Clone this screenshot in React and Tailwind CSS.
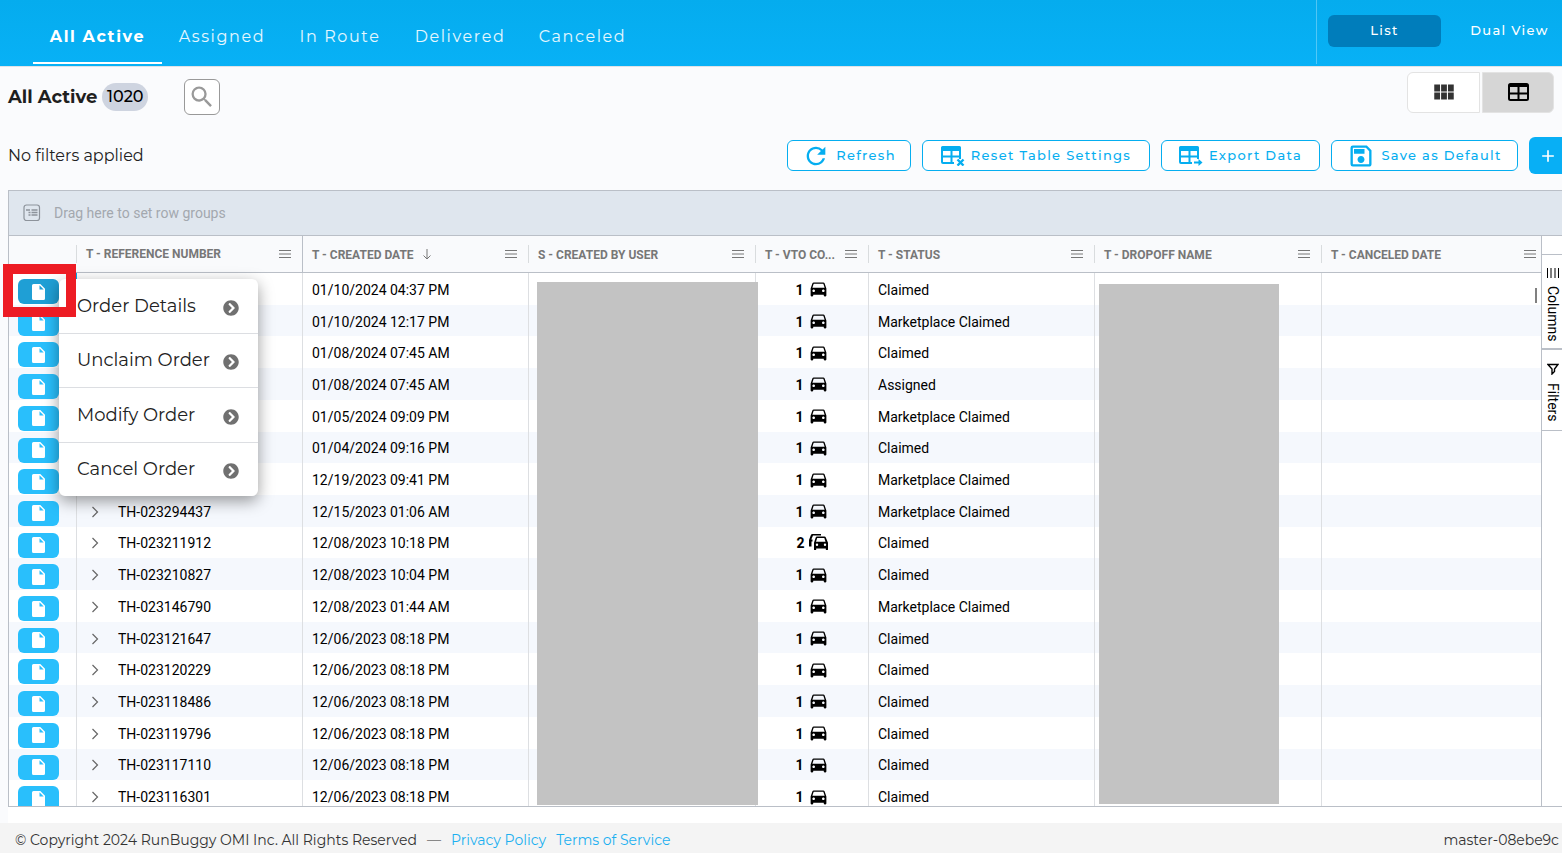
import { MdAdd, MdDirectionsCar, MdOutlineSave, MdRefresh, MdSearch, MdViewModule } from "react-icons/md";
import { FaChevronCircleRight } from "react-icons/fa";

const TABS = [
  { label: "All Active", active: true, width: "w-[129px]" },
  { label: "Assigned", width: "w-[120px]" },
  { label: "In Route", width: "w-[116px]" },
  { label: "Delivered", width: "w-[124px]" },
  { label: "Canceled", width: "w-[121px]" },
];

const COLUMNS = [
  { label: "T - REFERENCE NUMBER", width: "w-[226px]", pinned: true },
  { label: "T - CREATED DATE", width: "w-[226px]", sorted: true },
  { label: "S - CREATED BY USER", width: "w-[227px]" },
  { label: "T - VTO CO...", width: "w-[113px]" },
  { label: "T - STATUS", width: "w-[226px]" },
  { label: "T - DROPOFF NAME", width: "w-[227px]" },
  { label: "T - CANCELED DATE", last: true },
];

const ROWS = [
  { ref: "", created: "01/10/2024 04:37 PM", cars: 1, status: "Claimed" },
  { ref: "", created: "01/10/2024 12:17 PM", cars: 1, status: "Marketplace Claimed" },
  { ref: "", created: "01/08/2024 07:45 AM", cars: 1, status: "Claimed" },
  { ref: "", created: "01/08/2024 07:45 AM", cars: 1, status: "Assigned" },
  { ref: "", created: "01/05/2024 09:09 PM", cars: 1, status: "Marketplace Claimed" },
  { ref: "", created: "01/04/2024 09:16 PM", cars: 1, status: "Claimed" },
  { ref: "", created: "12/19/2023 09:41 PM", cars: 1, status: "Marketplace Claimed" },
  { ref: "TH-023294437", created: "12/15/2023 01:06 AM", cars: 1, status: "Marketplace Claimed" },
  { ref: "TH-023211912", created: "12/08/2023 10:18 PM", cars: 2, status: "Claimed" },
  { ref: "TH-023210827", created: "12/08/2023 10:04 PM", cars: 1, status: "Claimed" },
  { ref: "TH-023146790", created: "12/08/2023 01:44 AM", cars: 1, status: "Marketplace Claimed" },
  { ref: "TH-023121647", created: "12/06/2023 08:18 PM", cars: 1, status: "Claimed" },
  { ref: "TH-023120229", created: "12/06/2023 08:18 PM", cars: 1, status: "Claimed" },
  { ref: "TH-023118486", created: "12/06/2023 08:18 PM", cars: 1, status: "Claimed" },
  { ref: "TH-023119796", created: "12/06/2023 08:18 PM", cars: 1, status: "Claimed" },
  { ref: "TH-023117110", created: "12/06/2023 08:18 PM", cars: 1, status: "Claimed" },
  { ref: "TH-023116301", created: "12/06/2023 08:18 PM", cars: 1, status: "Claimed" },
];

const MENU_ITEMS = ["Order Details", "Unclaim Order", "Modify Order", "Cancel Order"];

// table glyph with a small badge in the lower right corner
function TableBadgeIcon({ badge }) {
  return (
    <svg viewBox="0 0 24 20" className="h-5 w-6 shrink-0" fill="none" stroke="currentColor" strokeWidth="2">
      <path d="M0 5V1.500A1.500 1.500 0 0 1 1.500 0h17A1.500 1.500 0 0 1 20 1.500V5z" fill="currentColor" stroke="none" />
      <path d="M19 4v9M13 17H2a1 1 0 0 1-1-1V4" />
      <path d="M1 10.500h18M10.500 4v13" />
      {badge === "x" && <path d="M16.500 13.500l6 6M22.500 13.500l-6 6" strokeWidth="2.400" />}
      {badge === "arrow" && (
        <>
          <path d="M15 16.500h5" />
          <path d="M19.500 13l4 3.500-4 3.500z" fill="currentColor" stroke="none" />
        </>
      )}
    </svg>
  );
}

function TableIcon() {
  return (
    <svg viewBox="0 0 21 18" className="h-[18px] w-[21px]" fill="none" stroke="currentColor" strokeWidth="2">
      <rect x="1" y="1" width="19" height="16" rx="1.500" />
      <path d="M1 2.500h19" strokeWidth="3" />
      <path d="M1 10.500h19M10.500 3v14" />
    </svg>
  );
}

function FileIcon() {
  return (
    <svg viewBox="0 0 13 16" className="h-4 w-[13px]" fill="currentColor">
      <path
        fillRule="evenodd"
        d="M1.500 0h6.800L13 4.800v9.700a1.500 1.500 0 0 1-1.500 1.500h-10A1.500 1.500 0 0 1 0 14.500v-13A1.500 1.500 0 0 1 1.500 0zM7.500 1.300V5.500h4.200z"
      />
    </svg>
  );
}

function CarsIcon() {
  return (
    <svg viewBox="0 0 19 18" className="h-[18px] w-[19px]" fill="currentColor">
      <path d="M0 13.500V7l1.900-5C2.200 1.300 2.700 1 3.400 1H12v1.500H4L2.300 6.500H3.500v2H2.500v5z" />
      <path
        fillRule="evenodd"
        d="M16.800 4.500c-.2-.6-.7-1-1.300-1H8c-.6 0-1.100.4-1.300 1L5 9.700V16.400c0 .3.300.6.600.6h1c.3 0 .6-.3.600-.6v-1h9.600v1c0 .3.300.6.600.6h1c.3 0 .6-.3.600-.6V9.700zM8.200 5h7.100l1.200 3.700H7zM8 13a1.200 1.200 0 1 1 0-2.400 1.200 1.200 0 0 1 0 2.400zm8 0a1.200 1.200 0 1 1 0-2.400 1.200 1.200 0 0 1 0 2.400z"
      />
    </svg>
  );
}

function MenuLines() {
  return (
    <button type="button" aria-label="Column menu" className="ml-auto shrink-0 text-[#777]">
      <svg viewBox="0 0 12 10" className="h-[10px] w-3" stroke="currentColor">
        <path d="M0 1.500h12M0 5h12M0 8.500h12" />
      </svg>
    </button>
  );
}

function ToolbarButton({ icon, children, className }) {
  return (
    <button
      type="button"
      className={`flex h-[31px] items-center justify-center gap-1.5 rounded-md border border-[#05aef0] bg-white text-[13px] font-medium tracking-widest whitespace-nowrap text-[#05aef0] ${className}`}
    >
      {icon}
      {children}
    </button>
  );
}

function TopBar() {
  return (
    <header className="flex h-[66px] shrink-0 bg-gradient-to-b from-[#05acee] to-[#08b1f6] pb-0.5 text-white">
      <nav className="flex pl-[33px]">
        {TABS.map((tab) => (
          <a
            key={tab.label}
            href="#"
            className={`flex items-center justify-center border-b-2 pt-3 text-base tracking-widest whitespace-nowrap ${tab.width} ${
              tab.active ? "border-white font-bold" : "border-transparent text-white/90"
            }`}
          >
            {tab.label}
          </a>
        ))}
      </nav>
      <div className="ml-auto flex items-start gap-4 border-l border-white/30 pt-[15px] pl-[11px]">
        <button type="button" className="h-8 w-[113px] rounded-md bg-[#007dbb] text-[13px] font-medium tracking-widest">
          List
        </button>
        <button type="button" className="h-8 w-[105px] text-[13px] font-medium tracking-widest whitespace-nowrap">
          Dual View
        </button>
      </div>
    </header>
  );
}

function TitleRow() {
  return (
    <div className="flex items-start border-t border-[#dfe3e8] px-2 pt-[5px]">
      <div className="flex h-[50px] items-center">
        <h1 className="text-lg font-bold text-[#1f1f1f]">All Active</h1>
        <span className="ml-[5px] flex h-7 w-[46px] items-center justify-center rounded-full bg-[#ced4e0] text-base font-medium text-black">
          1020
        </span>
        <button
          type="button"
          aria-label="Search"
          className="ml-9 flex h-9 w-9 items-center justify-center rounded-md border border-[#999] bg-white text-[#999]"
        >
          <MdSearch className="h-7 w-7" />
        </button>
      </div>
      <div className="ml-auto flex gap-0.5">
        <button
          type="button"
          aria-label="Card view"
          className="flex h-[41px] w-[73px] items-center justify-center rounded-l-md border border-[#e3e3e3] bg-white pb-0.5 text-[#333]"
        >
          <MdViewModule className="h-[26px] w-[26px]" />
        </button>
        <button
          type="button"
          aria-label="Table view"
          className="flex h-[41px] w-[72px] items-center justify-center rounded-r-md border border-[#e3e3e3] bg-[#d6d6d6] pb-0.5 text-black"
        >
          <TableIcon />
        </button>
      </div>
    </div>
  );
}

function Toolbar() {
  return (
    <div className="flex items-center pt-[15px] pl-2">
      <p className="text-base text-[#222]">No filters applied</p>
      <div className="ml-auto flex items-center gap-[11px]">
        <ToolbarButton className="w-[124px]" icon={<MdRefresh className="h-7 w-7" />}>
          Refresh
        </ToolbarButton>
        <ToolbarButton className="w-[228px]" icon={<TableBadgeIcon badge="x" />}>
          Reset Table Settings
        </ToolbarButton>
        <ToolbarButton className="w-[159px]" icon={<TableBadgeIcon badge="arrow" />}>
          Export Data
        </ToolbarButton>
        <ToolbarButton className="w-[187px]" icon={<MdOutlineSave className="h-7 w-7" />}>
          Save as Default
        </ToolbarButton>
        <button
          type="button"
          aria-label="Add"
          className="flex h-[37px] w-[33px] items-center justify-center rounded-l-md bg-[#08aff5] pl-1 text-white"
        >
          <MdAdd className="h-5 w-5" />
        </button>
      </div>
    </div>
  );
}

function OrdersTable() {
  return (
    <table className="h-[576px] w-full table-fixed border-separate border-spacing-0 text-sm text-black">
      <thead>
        <tr className="h-[37px] bg-[#f9fafc] text-xs text-[#777]">
          <th className="w-[68px] border-b border-[#babfc7] p-0">
            <div className="h-[18px] border-r border-[#d9dcde]" />
          </th>
          {COLUMNS.map((col) => (
            <th
              key={col.label}
              className={`border-b border-[#babfc7] p-0 ${col.width || ""} ${col.pinned ? "border-r" : ""}`}
            >
              <div
                className={`flex h-[18px] items-center gap-2 pl-[9px] ${
                  col.last ? "pr-[5px]" : "pr-[11px]"
                } ${col.pinned || col.last ? "" : "border-r border-[#d9dcde]"}`}
              >
                <span className={`font-bold whitespace-nowrap ${col.pinned ? "" : "pt-0.5"}`}>{col.label}</span>
                {col.sorted && (
                  <svg viewBox="0 0 10 12" className="h-3 w-[10px] shrink-0" fill="none" stroke="currentColor">
                    <path d="M5 1v10M1.500 7.500L5 11l3.500-3.500" />
                  </svg>
                )}
                <MenuLines />
              </div>
            </th>
          ))}
        </tr>
      </thead>
      <tbody>
        {ROWS.map((row, i) => (
          <tr key={i} className="odd:bg-white even:bg-[#f5f8fd]">
            <td className={`border-r p-0 pt-[6px] pl-[9px] align-top ${i === 0 ? "border-[#05aef0]" : "border-[#dddfe2]"}`}>
              <button
                type="button"
                aria-label="Order actions"
                className={`flex h-[25px] w-[41px] items-center justify-center rounded-md text-white ${
                  i === 0 ? "bg-[#1f9fd5]" : "bg-[#29bffc]"
                }`}
              >
                <FileIcon />
              </button>
            </td>
            <td className="border-r border-[#dddfe2] p-0 pt-0.5">
              {row.ref && (
                <div className="flex items-center pl-[14px]">
                  <svg viewBox="0 0 8 12" className="h-3 w-2" fill="none" stroke="#666" strokeWidth="1.200">
                    <path d="M1.500 1l5 5-5 5" />
                  </svg>
                  <span className="pl-[19px]">{row.ref}</span>
                </div>
              )}
            </td>
            <td className="border-r border-[#dddfe2] p-0 pt-0.5 pl-[9px]">{row.created}</td>
            <td className="border-r border-[#dddfe2] p-0" />
            <td className="border-r border-[#dddfe2] p-0">
              <div className="flex items-center justify-center gap-1 font-bold">
                <span className="pt-0.5">{row.cars}</span>
                {row.cars === 1 ? <MdDirectionsCar className="h-[21px] w-[21px]" /> : <CarsIcon />}
              </div>
            </td>
            <td className="border-r border-[#dddfe2] p-0 pt-0.5 pl-[9px]">{row.status}</td>
            <td className="border-r border-[#dddfe2] p-0" />
            <td className="p-0" />
          </tr>
        ))}
      </tbody>
    </table>
  );
}

function SideBar() {
  return (
    <aside className="flex w-[21px] shrink-0 flex-col border-l border-[#babfc7] bg-white pt-[18px] text-sm text-black">
      <button
        type="button"
        className="flex h-[95px] items-center gap-2 border-t border-b border-[#babfc7] pt-[13px] pl-0.5 [writing-mode:vertical-rl]"
      >
        <svg viewBox="0 0 12 10" className="h-[10px] w-3" stroke="currentColor">
          <path d="M.5 0v10M4 0v10M8 0v10M11.500 0v10" />
        </svg>
        Columns
      </button>
      <button
        type="button"
        className="flex h-[82px] items-center gap-2 border-t border-b border-[#babfc7] pt-[13px] pl-0.5 [writing-mode:vertical-rl]"
      >
        <svg viewBox="0 0 12 12" className="h-3 w-3" fill="none" stroke="currentColor" strokeWidth="1.400">
          <path d="M1 1.500h10L7.500 6v2.500L5 11V6z" />
        </svg>
        Filters
      </button>
    </aside>
  );
}

function OrderMenu() {
  return (
    <ul className="absolute top-[89px] left-[51px] flex h-[217px] w-[199px] flex-col rounded-md bg-white shadow-[0_5px_16px_rgba(0,0,0,0.4)]">
      {MENU_ITEMS.map((item) => (
        <li key={item} className="flex flex-1 border-b border-[#dcdee2] last:border-b-0">
          <button type="button" className="flex w-full items-center justify-between pr-[19px] pl-[18px] text-lg text-[#222]">
            <span className="whitespace-nowrap">{item}</span>
            <FaChevronCircleRight className="mt-1 h-4 w-4 text-[#707070]" />
          </button>
        </li>
      ))}
    </ul>
  );
}

export default function App() {
  return (
    <div className="flex h-screen flex-col overflow-hidden bg-[#fafbfd] font-['Montserrat','Inter',sans-serif]">
      <TopBar />
      <TitleRow />
      <Toolbar />

      <main className="relative mt-4 ml-2 flex min-h-0 flex-1 flex-col bg-white pb-4 font-['Roboto',sans-serif]">
        <div className="flex min-h-0 flex-1 flex-col border-y border-l border-[#babfc7]">
          <div className="flex h-[45px] shrink-0 items-center border-b border-[#babfc7] bg-[#dfe6ee] pl-[14px] text-sm text-[#a3a8ae]">
            <svg viewBox="0 0 18 18" className="h-[18px] w-[18px]" fill="none" stroke="#8d939b">
              <rect x="1" y="1" width="15.500" height="15.500" rx="2.500" strokeWidth="1.200" />
              <path d="M3 6h4M8.500 6h6M5.500 8.500h2M8.500 8.500h6M5.500 11h2M8.500 11h6" strokeWidth="1.400" />
            </svg>
            <span className="pl-[13px]">Drag here to set row groups</span>
          </div>
          <div className="flex min-h-0 flex-1">
            <div className="relative min-w-0 flex-1 overflow-hidden">
              <OrdersTable />
              <div className="absolute top-[46px] bottom-px left-[528px] w-[221px] bg-[#c3c3c3]" />
              <div className="absolute top-12 bottom-0.5 left-[1090px] w-[180px] bg-[#c3c3c3]" />
              <div className="absolute top-[52px] right-1 h-[15px] w-0.5 bg-[#808080]" />
            </div>
            <SideBar />
          </div>
        </div>
        <div className="font-['Montserrat','Inter',sans-serif]">
          <OrderMenu />
        </div>
        <div className="pointer-events-none absolute top-[74px] -left-[5px] h-[53px] w-[73px] border-10 border-[#ed1c24]" />
      </main>

      <footer className="flex h-[30px] shrink-0 items-center bg-[#f4f4f4] pt-1 pr-[3px] pl-[15px] text-sm text-[#333]">
        <div className="flex gap-[10px]">
          <span>© Copyright 2024 RunBuggy OMI Inc. All Rights Reserved</span>
          <span className="text-[#888]">—</span>
          <a href="#" className="text-[#1cb0f0]">Privacy Policy</a>
          <a href="#" className="text-[#1cb0f0]">Terms of Service</a>
        </div>
        <span className="ml-auto">master-08ebe9c</span>
      </footer>
    </div>
  );
}
